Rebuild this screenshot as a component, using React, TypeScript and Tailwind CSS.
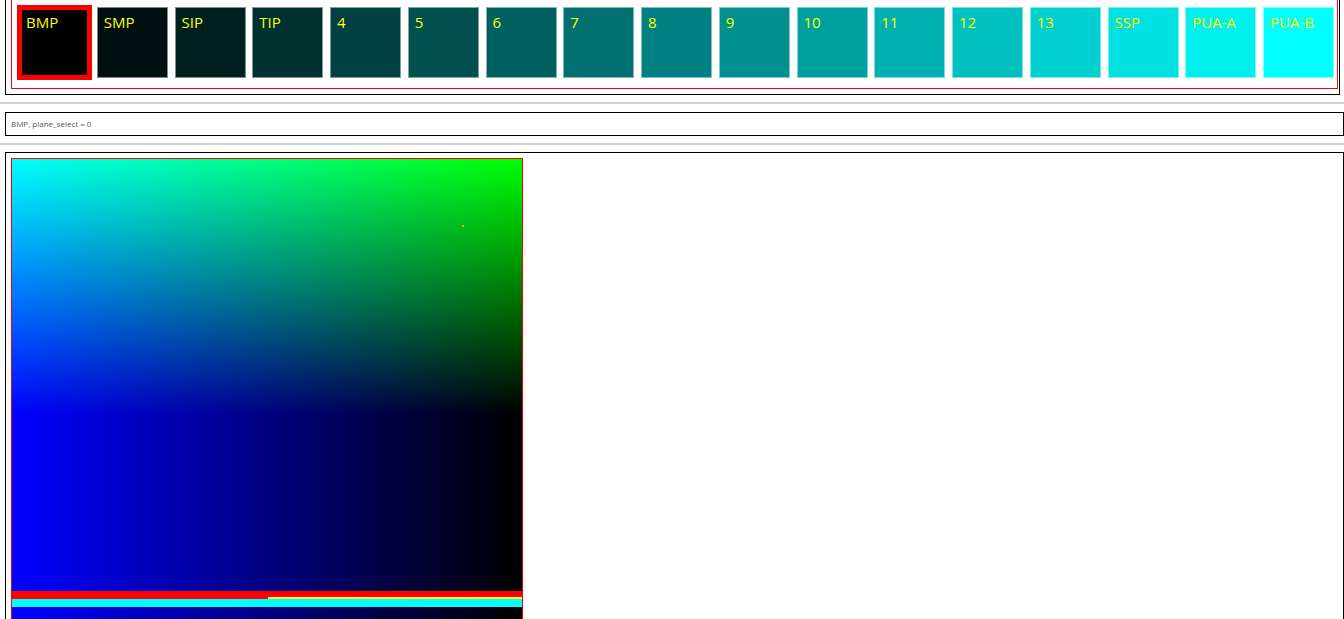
import React from "react";

const tiles: { label: string; bg: string }[] = [
  { label: "BMP", bg: "bg-[#000000]" },
  { label: "SMP", bg: "bg-[#001010]" },
  { label: "SIP", bg: "bg-[#002020]" },
  { label: "TIP", bg: "bg-[#003030]" },
  { label: "4", bg: "bg-[#004040]" },
  { label: "5", bg: "bg-[#005050]" },
  { label: "6", bg: "bg-[#006060]" },
  { label: "7", bg: "bg-[#007070]" },
  { label: "8", bg: "bg-[#008080]" },
  { label: "9", bg: "bg-[#009090]" },
  { label: "10", bg: "bg-[#00a0a0]" },
  { label: "11", bg: "bg-[#00b0b0]" },
  { label: "12", bg: "bg-[#00c0c0]" },
  { label: "13", bg: "bg-[#00d0d0]" },
  { label: "SSP", bg: "bg-[#00e0e0]" },
  { label: "PUA-A", bg: "bg-[#00f0f0]" },
  { label: "PUA-B", bg: "bg-[#00ffff]" },
];

function Tile({ label, bg, selected }: { label: string; bg: string; selected: boolean }) {
  return (
    <div
      className={
        "box-border w-[71px] h-[71px] shrink-0 border pt-[4px] pl-[6px] text-[15px] leading-[20px] text-[#ffff00] font-['Open_Sans',sans-serif] " +
        bg +
        " " +
        (selected
          ? "border-[#ff0000] outline-2 outline-solid outline-[#ff0000] shadow-[inset_0_0_0_2px_#ff0000]"
          : "border-white/50")
      }
    >
      {label}
    </div>
  );
}

function Hr() {
  return <div className="h-[2px] w-full bg-[#d2d2d2]" />;
}

export default function App() {
  return (
    <div className="bg-white min-h-screen font-['Open_Sans',sans-serif]">
      {/* Plane selector */}
      <div className="box-border -mt-[10px] ml-[5px] w-[1335px] border border-black pl-[5px] pr-[1px] py-[5px]">
        <div className="box-border w-[1327px] border border-[#ff0000] pt-[10px] pb-[10px] pl-[7px] pr-[3px] flex justify-between">
          {tiles.map((t, i) => (
            <Tile key={t.label} label={t.label} bg={t.bg} selected={i === 0} />
          ))}
        </div>
      </div>

      <div className="mt-[7px] mb-[8px]">
        <Hr />
      </div>

      {/* Status */}
      <div className="box-border ml-[5px] w-[1339px] h-[24px] border border-black pl-[5px] text-[8px] leading-[22px] text-[#5a5a5a]">
        BMP, plane_select = 0
      </div>

      <div className="mt-[7px] mb-[7px]">
        <Hr />
      </div>

      {/* Canvas panel */}
      <div className="box-border ml-[5px] w-[1339px] border border-black p-[5px]">
        <div className="relative box-border w-[512px] border border-[#ff0000] flex flex-col">
          <div className="h-[256px] w-full bg-[image:linear-gradient(to_bottom,#00ff00,#000000),linear-gradient(to_right,#0000ff,#000000)] bg-blend-screen" />
          <div className="h-[176px] w-full bg-[linear-gradient(to_right,#0000ff,#000000)]" />
          <div className="h-[8px] w-full bg-[#ff0000] flex justify-end items-end">
            <div className="h-[2px] w-[254px] bg-[#ffff00]" />
          </div>
          <div className="h-[8px] w-full bg-[#00ffff]" />
          <div className="h-[200px] w-full bg-[linear-gradient(to_right,#0000ff,#000000)]" />
          <span className="absolute left-[450px] top-[66px] w-[2px] h-[2px] bg-[#f2a900]" />
        </div>
      </div>
    </div>
  );
}
